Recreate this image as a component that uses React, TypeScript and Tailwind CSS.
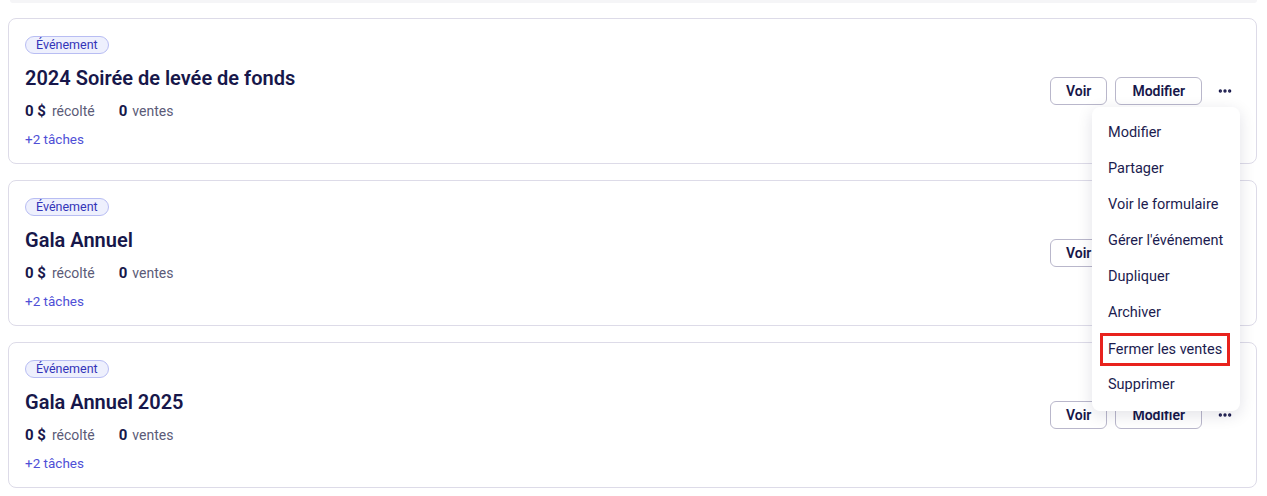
import { MoreHorizontal } from "lucide-react";

const events = [
    { title: "2024 Soirée de levée de fonds", open: true },
    { title: "Gala Annuel", open: false },
    { title: "Gala Annuel 2025", open: false },
];

const menuItems = [
    "Modifier",
    "Partager",
    "Voir le formulaire",
    "Gérer l'événement",
    "Dupliquer",
    "Archiver",
    "Fermer les ventes",
    "Supprimer",
];

function ActionsMenu() {
    return (
        <div className="absolute right-0 top-[30px] z-10 w-[148px] rounded-lg bg-white py-2 shadow-[0_4px_16px_rgba(20,20,60,0.12)]">
            {menuItems.map((item) => (
                <div key={item} className="flex h-9 items-center px-4 text-[14.5px] text-[#1c1c4f]">
                    {item === "Fermer les ventes" ? (
                        <span className="-mx-[8px] border-[3px] border-[#e8221d] px-[5px] py-[5px] leading-[17px]">{item}</span>
                    ) : (
                        item
                    )}
                </div>
            ))}
        </div>
    );
}

function EventCard({ title, open }: { title: string; open: boolean }) {
    return (
        <div className="flex h-[146px] items-center justify-between rounded-lg border border-[#dddbe8] bg-white px-4">
            <div className="flex flex-col">
                <span className="self-start rounded-full border border-[#b8bdf3] bg-[#eef0fd] px-[10px] text-[12.5px] leading-[16px] text-[#3434b8]">
                    Événement
                </span>
                <h2 className="mt-[11px] text-[20px] font-semibold leading-[26px] text-[#17174a]">{title}</h2>
                <div className="mt-[10px] flex items-baseline text-[14px] leading-[20px]">
                    <span className="text-[15px] font-bold text-[#17174a]">0 $</span>
                    <span className="ml-[6px] text-[#5b5b78]">récolté</span>
                    <span className="ml-[24px] text-[15px] font-bold text-[#17174a]">0</span>
                    <span className="ml-[5px] text-[#5b5b78]">ventes</span>
                </div>
                <span className="mt-[10px] text-[13.5px] leading-[16px] text-[#4f4fd6]">+2 tâches</span>
            </div>
            <div className="relative flex items-center gap-2">
                <button className="h-7 rounded-md border border-[#b9b7cb] px-[15px] text-[14px] font-semibold text-[#17174a]">
                    Voir
                </button>
                <button className="h-7 rounded-md border border-[#b9b7cb] px-[16px] text-[14px] font-semibold text-[#17174a]">
                    Modifier
                </button>
                <button className="flex h-7 w-[30px] items-center justify-center text-[#17174a]">
                    <MoreHorizontal className="h-4 w-4" strokeWidth={3} />
                </button>
                {open && <ActionsMenu />}
            </div>
        </div>
    );
}

export default function App() {
    return (
        <div className="h-[496px] w-[1267px] overflow-hidden bg-white font-['Roboto',sans-serif]">
            <div className="mx-[10px] h-[3px] rounded-b-lg bg-[#f5f5f7]" />
            <div className="ml-2 mr-[10px] mt-[15px] flex flex-col gap-4">
                {events.map((e) => (
                    <EventCard key={e.title} title={e.title} open={e.open} />
                ))}
            </div>
        </div>
    );
}
